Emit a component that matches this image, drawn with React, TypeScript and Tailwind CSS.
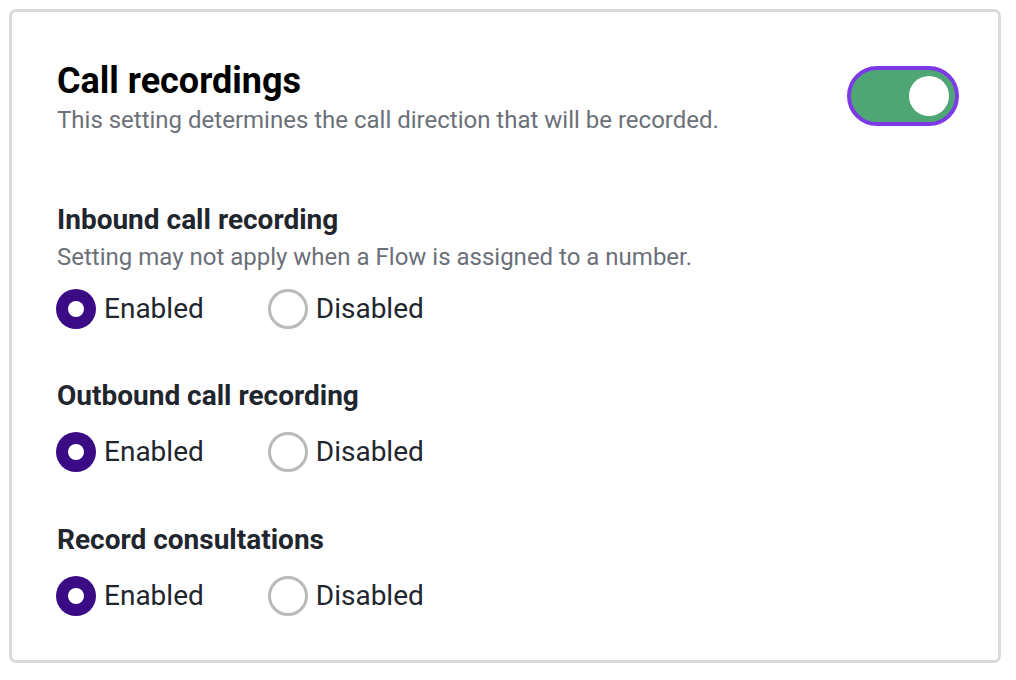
import { useState } from "react";

type Choice = "enabled" | "disabled";

function Radio({ checked, label, onClick }: { checked: boolean; label: string; onClick: () => void }) {
  return (
    <button type="button" onClick={onClick} className="flex items-center gap-[8px]">
      {checked ? (
        <span className="flex h-[40px] w-[40px] items-center justify-center rounded-full bg-[#3b0b86]">
          <span className="h-[16px] w-[16px] rounded-full bg-white" />
        </span>
      ) : (
        <span className="h-[40px] w-[40px] rounded-full border-[3px] border-[#b8babe] bg-white" />
      )}
      <span className="text-[28px] leading-[34px] text-[#1f262e]">{label}</span>
    </button>
  );
}

function RadioGroup({ className }: { className: string }) {
  const [value, setValue] = useState<Choice>("enabled");
  return (
    <div className={`ml-[-1px] flex items-center gap-[64px] ${className}`}>
      <Radio checked={value === "enabled"} label="Enabled" onClick={() => setValue("enabled")} />
      <Radio checked={value === "disabled"} label="Disabled" onClick={() => setValue("disabled")} />
    </div>
  );
}

export default function App() {
  const [on, setOn] = useState(true);

  return (
    <main className="min-h-screen bg-white p-[9px] font-['Roboto',sans-serif]">
      <div className="w-[992px] h-[654px] rounded-[7px] border-[3px] border-[#d8dadd] px-[45px] pt-[48px]">
        <div className="flex items-start justify-between">
          <div>
            <h1 className="text-[36px] font-bold leading-[42px] text-black">Call recordings</h1>
            <p className="mt-[4px] text-[24px] leading-[28px] text-[#6b7079]">
              This setting determines the call direction that will be recorded.
            </p>
          </div>
          <button
            type="button"
            onClick={() => setOn(!on)}
            className={`mt-[6px] mr-[-6px] flex h-[60px] w-[112px] shrink-0 items-center rounded-full border-[4px] border-[#7c3ae6] px-[6px] ${
              on ? "justify-end bg-[#4ea674]" : "justify-start bg-[#c4c7cc]"
            }`}
          >
            <span className="h-[40px] w-[40px] rounded-full bg-white" />
          </button>
        </div>

        <section className="mt-[70px]">
          <h2 className="text-[28px] font-bold leading-[32px] text-[#1f262e]">Inbound call recording</h2>
          <p className="mt-[7px] text-[24px] leading-[28px] text-[#6b7079]">
            Setting may not apply when a Flow is assigned to a number.
          </p>
          <RadioGroup className="mt-[18px]" />
        </section>

        <section className="mt-[51px]">
          <h2 className="text-[28px] font-bold leading-[32px] text-[#1f262e]">Outbound call recording</h2>
          <RadioGroup className="mt-[20px]" />
        </section>

        <section className="mt-[52px]">
          <h2 className="text-[28px] font-bold leading-[32px] text-[#1f262e]">Record consultations</h2>
          <RadioGroup className="mt-[20px]" />
        </section>
      </div>
    </main>
  );
}
